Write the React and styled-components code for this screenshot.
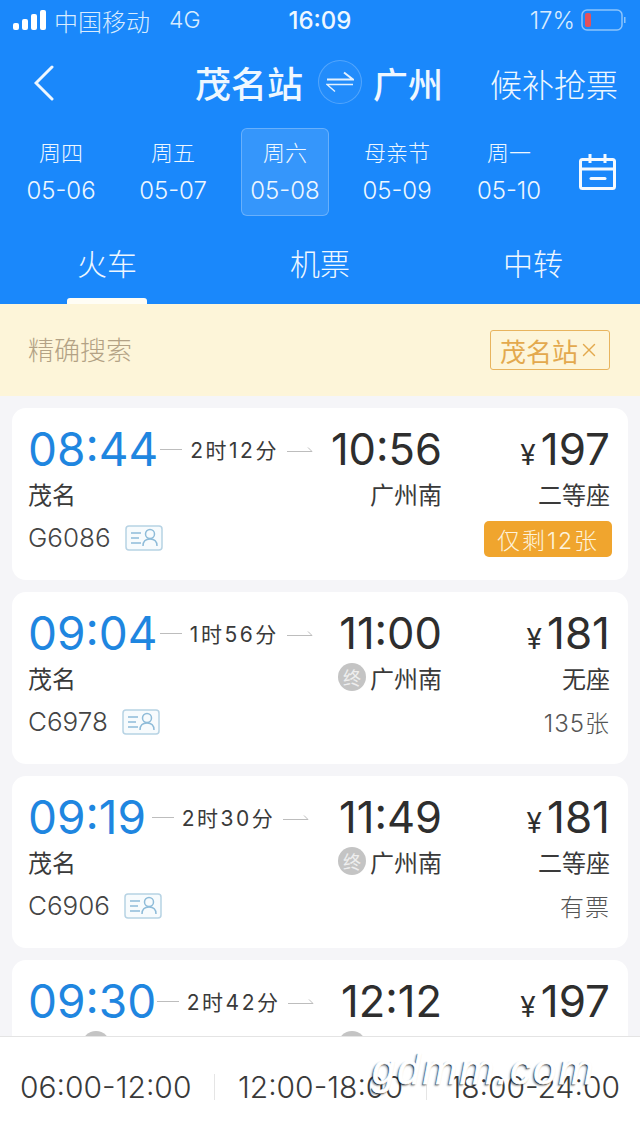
import React from 'react';
import styled, { createGlobalStyle } from 'styled-components';
import { X } from 'lucide-react';

const GlobalStyle = createGlobalStyle`
  html, body {
    margin: 0;
    padding: 0;
    background: #f5f5f8;
  }

  body {
    font-family: Inter, "Noto Sans CJK SC", sans-serif;
  }
`;

const Page = styled.div`
  display: flex;
  flex-direction: column;
  height: 1136px;
  overflow: hidden;
  position: relative;
  width: 640px;
`;

const Header = styled.header`
  background: #1a88fb;
  color: #eef7ff;
  flex: none;
  height: 304px;
`;

const StatusBar = styled.div`
  align-items: center;
  display: grid;
  grid-template-columns: 1fr auto 1fr;
  height: 40px;
  padding: 0 13px;
`;

const StatusLeft = styled.div`
  align-items: center;
  display: flex;
  font-size: 24px;
  gap: 7px;
`;

const Carrier = styled.span`
  color: #d8ecff;
  font-weight: 300;
`;

const Network = styled.span`
  color: #d8ecff;
  font-size: 23px;
  font-weight: 300;
  margin-left: 12px;
`;

const Clock = styled.span`
  font-size: 24px;
  font-weight: 500;
`;

const StatusRight = styled.div`
  align-items: center;
  color: #d8ecff;
  display: flex;
  font-size: 24px;
  font-weight: 300;
  gap: 6px;
  justify-content: flex-end;
`;

const NavBar = styled.div`
  align-items: center;
  display: grid;
  grid-template-columns: 161px 1fr auto;
  height: 86px;
  padding: 0 22px 0 34px;
`;

const Route = styled.div`
  align-items: center;
  display: flex;
  font-size: 36px;
  font-weight: 500;
  margin-bottom: 2px;
`;

const SwapCircle = styled.span`
  align-items: center;
  background: rgba(255, 255, 255, 0.04);
  border: 1px solid rgba(255, 255, 255, 0.22);
  border-radius: 50%;
  display: flex;
  height: 42px;
  justify-content: center;
  margin: 0 11px 0 15px;
  width: 42px;
`;

const RouteCity = styled.span`
  font-size: 35px;
`;

const Backfill = styled.span`
  font-size: 32px;
  font-weight: 300;
`;

const DateRow = styled.div`
  display: flex;
  height: 88px;
  margin-top: 2px;
  padding-left: 17px;
`;

const DateItem = styled.div`
  align-items: center;
  background: ${(p) => (p.$active ? 'rgba(255, 255, 255, 0.12)' : 'transparent')};
  border: 1px solid ${(p) => (p.$active ? 'rgba(255, 255, 255, 0.25)' : 'transparent')};
  border-radius: 6px;
  box-sizing: border-box;
  display: flex;
  flex-direction: column;
  gap: 8px;
  height: 88px;
  justify-content: center;
  margin-right: 24px;
  width: 88px;
`;

const DayLabel = styled.span`
  font-size: 22px;
  font-weight: 300;
  line-height: 30px;
`;

const DateLabel = styled.span`
  font-size: 24px;
  font-weight: 300;
  line-height: 30px;
`;

const CalendarSlot = styled.div`
  align-items: center;
  display: flex;
  margin-left: 2px;
`;

const Tabs = styled.div`
  display: grid;
  grid-template-columns: 214px 212px 214px;
  height: 64px;
  margin-top: 24px;
`;

const Tab = styled.div`
  font-size: 30px;
  font-weight: 300;
  line-height: 48px;
  position: relative;
  text-align: center;

  ${(p) => p.$active && `
    &::after {
      background: #fffdf5;
      border-radius: 3px 3px 0 0;
      bottom: 0;
      content: '';
      height: 6px;
      left: 67px;
      position: absolute;
      width: 80px;
    }
  `}
`;

const FilterBar = styled.div`
  align-items: center;
  background: #fdf5d9;
  display: flex;
  flex: none;
  height: 92px;
  justify-content: space-between;
  padding: 0 30px 0 28px;
`;

const FilterTitle = styled.span`
  color: #b3a285;
  font-size: 26px;
  font-weight: 300;
  margin-top: -4px;
`;

const FilterChip = styled.span`
  align-items: center;
  border: 1px solid #e8b45e;
  border-radius: 3px;
  box-sizing: border-box;
  color: #e3a94e;
  display: flex;
  font-size: 26px;
  height: 40px;
  justify-content: center;
  width: 120px;
`;

const List = styled.main`
  display: flex;
  flex: 1;
  flex-direction: column;
  gap: 12px;
  min-height: 0;
  overflow: hidden;
  padding: 12px 12px 0;
`;

const Card = styled.article`
  background: #fff;
  border-radius: 14px;
  box-sizing: border-box;
  display: grid;
  flex: none;
  grid-template-columns: 287px 127px 168px;
  grid-template-rows: 50px 37px 52px;
  height: 172px;
  padding: 16px 18px 0 16px;
`;

const Depart = styled.div`
  align-items: center;
  display: flex;
`;

const Time = styled.span`
  color: ${(p) => (p.$blue ? '#1f86e0' : '#2e2e2e')};
  font-size: ${(p) => (p.$blue ? '46px' : '43.5px')};
  font-weight: 400;
  line-height: 50px;
  text-align: ${(p) => (p.$blue ? 'left' : 'right')};
`;

const Duration = styled.div`
  align-items: center;
  color: #3a3a3a;
  display: flex;
  flex: 1;
  font-size: 21px;
  font-weight: 400;
  gap: 8px;
  justify-content: center;
  letter-spacing: 2.5px;
  white-space: nowrap;
`;

const DashLeft = styled.span`
  background: #bdbdbd;
  flex: none;
  height: 1px;
  width: 22px;
`;

const DashRight = styled.svg`
  flex: none;
  height: 8px;
  width: 26px;
`;

const Price = styled.div`
  align-items: baseline;
  color: #2e2e2e;
  display: flex;
  font-size: 44px;
  font-weight: 400;
  justify-content: flex-end;
  line-height: 50px;
`;

const Yen = styled.span`
  font-size: 28px;
  margin-right: 5px;
`;

const Station = styled.div`
  align-items: center;
  color: #3a3a3a;
  display: flex;
  font-size: 24px;
  font-weight: 400;
  gap: 4px;
  justify-content: ${(p) => (p.$end ? 'flex-end' : 'flex-start')};
  padding-top: 1px;
`;

const StopBadge = styled.span`
  align-items: center;
  background: #c4c4c4;
  border-radius: 50%;
  color: #eee;
  display: flex;
  font-size: 18px;
  height: 28px;
  justify-content: center;
  margin-left: ${(p) => p.$offset || 0}px;
  width: 28px;
`;

// holds the place of the station name the bottom bar hides on the last card
const StationSpacer = styled.span`
  flex: none;
  width: 72px;
`;

const TrainNo = styled.div`
  align-items: center;
  color: #444;
  display: flex;
  font-size: 26px;
  font-weight: 300;
  gap: 14px;
  grid-column: span 2;
  padding-top: 1px;
`;

const Remaining = styled.div`
  align-items: center;
  color: #555;
  display: flex;
  font-size: 24px;
  font-weight: 300;
  justify-content: flex-end;
  letter-spacing: 1px;
  padding-top: 1px;
`;

const Badge = styled.span`
  align-items: center;
  background: #f0a52e;
  border-radius: 5px;
  color: #fdf3dc;
  display: flex;
  font-size: 23px;
  font-weight: 300;
  height: 36px;
  justify-content: center;
  letter-spacing: 2px;
  margin: 2px -2px 0 0;
  width: 128px;
`;

const BottomBar = styled.footer`
  align-items: center;
  background: #fff;
  border-top: 1px solid #e4e4e4;
  box-sizing: border-box;
  display: flex;
  flex: none;
  height: 100px;
  justify-content: space-between;
  padding: 0 20px;
  position: relative;
  z-index: 1;
`;

const Slot = styled.span`
  color: #3a3a3a;
  font-size: 30px;
  font-weight: 300;
  white-space: nowrap;
`;

const SlotDivider = styled.span`
  background: #e5e5e5;
  height: 26px;
  width: 1px;
`;

const Watermark = styled.span`
  -webkit-text-stroke: 0.8px #fff;
  bottom: 41px;
  color: #fff;
  font-family: "Liberation Sans", sans-serif;
  font-size: 42px;
  font-style: italic;
  left: 372px;
  letter-spacing: 2px;
  line-height: 50px;
  position: absolute;
  text-shadow: -1px 1px 1px rgba(0, 0, 0, 0.8), -2px 2px 2px rgba(0, 0, 0, 0.35);
  z-index: 2;
`;

const SignalIcon = () => (
  <svg width="34" height="20" viewBox="0 0 34 20" fill="#fff">
    <rect x="0" y="13" width="6" height="7" rx="2" />
    <rect x="9" y="9" width="6" height="11" rx="2" />
    <rect x="18" y="4" width="6" height="16" rx="2" />
    <rect x="27" y="0" width="6" height="20" rx="2" />
  </svg>
);

const BatteryIcon = () => (
  <svg width="46" height="24" viewBox="0 0 46 24" fill="none">
    <rect x="1" y="2" width="40" height="20" rx="5" stroke="#8cc4fb" strokeWidth="1.5" />
    <rect x="4" y="5" width="6" height="14" rx="2" fill="#e5505a" />
    <rect x="43" y="9" width="1.5" height="6" fill="#8cc4fb" />
  </svg>
);

const BackIcon = () => (
  <svg width="20" height="36" viewBox="0 0 20 36" fill="none" stroke="#eef7ff" strokeWidth="3" strokeLinecap="round">
    <path d="M18 2 2 18l16 16" />
  </svg>
);

const SwapIcon = () => (
  <svg width="28" height="24" viewBox="0 0 28 24" fill="none" stroke="#e4f1fe">
    <path d="M1 9.5h26l-9-7" strokeWidth="2" />
    <path d="M27 14.5H1l8 7" strokeWidth="1.4" />
  </svg>
);

const CalendarIcon = () => (
  <svg width="37" height="36" viewBox="0 0 37 36" fill="none" stroke="#f4faff" strokeWidth="3">
    <rect x="1.5" y="5.5" width="34" height="29" rx="2" />
    <path d="M1.5 15h34" />
    <path d="M11 0v9M26 0v9" />
    <path d="M12 24.5h14" strokeLinecap="round" />
  </svg>
);

const IdIcon = () => (
  <svg width="38" height="26" viewBox="0 0 38 26" fill="#f7fbfd" stroke="#b7d3e4" strokeWidth="1.5">
    <rect x="1" y="1" width="36" height="24" rx="3" />
    <path d="M6 8h10M6 13h8M6 18h10" stroke="#8fbcd9" fill="none" />
    <circle cx="25" cy="9" r="4.5" fill="none" stroke="#8fbcd9" />
    <path d="M18 21c0-5 3-7 7-7s7 2 7 7" fill="none" stroke="#8fbcd9" />
  </svg>
);

const tickets = [
  { from: '08:44', duration: '2时12分', to: '10:56', yen: '197', seat: '二等座', no: 'G6086', left: '仅剩12张', hot: true },
  { from: '09:04', duration: '1时56分', to: '11:00', yen: '181', seat: '无座', no: 'C6978', left: '135张', end: true },
  { from: '09:19', duration: '2时30分', to: '11:49', yen: '181', seat: '二等座', no: 'C6906', left: '有票', end: true },
  // only the top of this one shows above the bottom bar
  { from: '09:30', duration: '2时42分', to: '12:12', yen: '197', partial: true },
];

const dates = [
  { day: '周四', date: '05-06' },
  { day: '周五', date: '05-07' },
  { day: '周六', date: '05-08', active: true },
  { day: '母亲节', date: '05-09' },
  { day: '周一', date: '05-10' },
];

const TicketCard = ({ ticket }) => (
  <Card>
    <Depart>
      <Time $blue>{ticket.from}</Time>
      <Duration>
        <DashLeft />
        {ticket.duration}
        <DashRight viewBox="0 0 26 8" fill="none" stroke="#bdbdbd" strokeWidth="1">
          <path d="M0 6.5h25l-4-4" />
        </DashRight>
      </Duration>
    </Depart>
    <Time>{ticket.to}</Time>
    <Price><Yen>¥</Yen>{ticket.yen}</Price>
    {ticket.partial ? (
      <>
        <Station><StopBadge $offset={54} /></Station>
        <Station $end><StopBadge /><StationSpacer /></Station>
      </>
    ) : (
      <>
        <Station>茂名</Station>
        <Station $end>
          {ticket.end && <StopBadge>终</StopBadge>}
          广州南
        </Station>
        <Station $end>{ticket.seat}</Station>
        <TrainNo>{ticket.no}<IdIcon /></TrainNo>
        <Remaining>{ticket.hot ? <Badge>{ticket.left}</Badge> : ticket.left}</Remaining>
      </>
    )}
  </Card>
);

export default function App() {
  return (
    <Page>
      <GlobalStyle />
      <Header>
        <StatusBar>
          <StatusLeft>
            <SignalIcon />
            <Carrier>中国移动</Carrier>
            <Network>4G</Network>
          </StatusLeft>
          <Clock>16:09</Clock>
          <StatusRight>17%<BatteryIcon /></StatusRight>
        </StatusBar>
        <NavBar>
          <BackIcon />
          <Route>
            茂名站
            <SwapCircle><SwapIcon /></SwapCircle>
            <RouteCity>广州</RouteCity>
          </Route>
          <Backfill>候补抢票</Backfill>
        </NavBar>
        <DateRow>
          {dates.map((d) => (
            <DateItem key={d.date} $active={d.active}>
              <DayLabel>{d.day}</DayLabel>
              <DateLabel>{d.date}</DateLabel>
            </DateItem>
          ))}
          <CalendarSlot><CalendarIcon /></CalendarSlot>
        </DateRow>
        <Tabs>
          <Tab $active>火车</Tab>
          <Tab>机票</Tab>
          <Tab>中转</Tab>
        </Tabs>
      </Header>
      <FilterBar>
        <FilterTitle>精确搜索</FilterTitle>
        <FilterChip>茂名站<X size={22} strokeWidth={1.5} /></FilterChip>
      </FilterBar>
      <List>
        {tickets.map((t) => <TicketCard key={t.from} ticket={t} />)}
      </List>
      <BottomBar>
        <Slot>06:00-12:00</Slot>
        <SlotDivider />
        <Slot>12:00-18:00</Slot>
        <SlotDivider />
        <Slot>18:00-24:00</Slot>
      </BottomBar>
      <Watermark>gdmm.com</Watermark>
    </Page>
  );
}
